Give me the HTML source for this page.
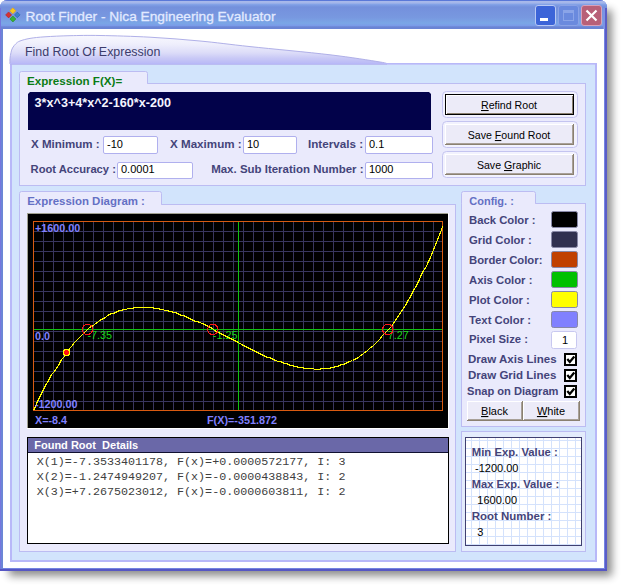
<!DOCTYPE html>
<html><head><meta charset="utf-8"><title>Root Finder</title>
<style>html,body{margin:0;padding:0;background:#fff;overflow:hidden} svg{display:block} text{white-space:pre}</style>
</head><body><svg width="623" height="587" viewBox="0 0 623 587" shape-rendering="auto"><defs>
<linearGradient id="tb" x1="0" y1="0" x2="0" y2="29" gradientUnits="userSpaceOnUse">
 <stop offset="0" stop-color="#5a78d8"/>
 <stop offset="0.035" stop-color="#5a78d8"/>
 <stop offset="0.05" stop-color="#a8b8ea"/>
 <stop offset="0.10" stop-color="#a4b6ea"/>
 <stop offset="0.16" stop-color="#80a0e6"/>
 <stop offset="0.24" stop-color="#7490dc"/>
 <stop offset="0.60" stop-color="#7898e0"/>
 <stop offset="0.80" stop-color="#7aa6e6"/>
 <stop offset="0.88" stop-color="#7a9ce8"/>
 <stop offset="0.93" stop-color="#6a84d4"/>
 <stop offset="1" stop-color="#6a84d4"/>
</linearGradient>
<linearGradient id="hdr" x1="0" y1="36" x2="0" y2="64" gradientUnits="userSpaceOnUse">
 <stop offset="0" stop-color="#f8f8fe"/>
 <stop offset="0.3" stop-color="#eeeefc"/>
 <stop offset="0.6" stop-color="#dcdcf8"/>
 <stop offset="0.8" stop-color="#c8c8f6"/>
 <stop offset="1" stop-color="#b8b8f6"/>
</linearGradient>
<filter id="shf" x="-10%" y="-10%" width="130%" height="130%"><feGaussianBlur stdDeviation="4"/></filter>
<pattern id="gp" x="471" y="440" width="8" height="8" patternUnits="userSpaceOnUse">
 <rect x="0" y="0" width="8" height="8" fill="#ffffff"/>
 <rect x="0" y="0" width="1" height="8" fill="#d4e2fc"/>
 <rect x="0" y="0" width="8" height="1" fill="#d4e2fc"/>
</pattern>
</defs>
<rect x="0" y="0" width="623" height="587" fill="#ffffff" />
<rect x="9" y="10" width="603" height="566" fill="#000" opacity="0.45" filter="url(#shf)"/>
<path d="M0 8 Q0 0 8 0 L599 0 Q607 0 607 8 L607 571 L0 571 Z" fill="#7484e0"/>
<path d="M0 8 Q0 0 8 0 L599 0 Q607 0 607 8 L607 29 L0 29 Z" fill="url(#tb)"/>
<rect x="0" y="8" width="1" height="563" fill="#7676de" />
<rect x="1" y="29" width="2" height="542" fill="#6c86d6" />
<rect x="605" y="8" width="2" height="563" fill="#5a5cc8" />
<rect x="603" y="8" width="2" height="21" fill="#7c94e4" />
<rect x="0" y="569" width="607" height="2" fill="#5656c4" />
<rect x="3" y="29" width="601" height="539" fill="#ffffff" />
<path d="M12.8 7.800000000000001 L15.8 10.8 L12.8 13.8 L9.8 10.8 Z" fill="#f8c820" stroke="#e0a010" stroke-width="0.6"/>
<path d="M8.6 11.9 L11.6 14.9 L8.6 17.9 L5.6 14.9 Z" fill="#d83030" stroke="#b02020" stroke-width="0.6"/>
<path d="M17.3 12.100000000000001 L20.1 14.9 L17.3 17.7 L14.5 14.9 Z" fill="#3c80c8" stroke="#2a60a8" stroke-width="0.6"/>
<path d="M12.9 16.0 L15.9 19.0 L12.9 22.0 L9.9 19.0 Z" fill="#38b038" stroke="#209020" stroke-width="0.6"/>
<text x="25.5" y="21" font-family="Liberation Sans" font-size="13.7" font-weight="normal" fill="#e2eaff" text-anchor="start" transform="translate(25.5 0) scale(1.0020 1) translate(-25.5 0)" stroke="#e2eaff" stroke-width="0.3">Root Finder - Nica Engineering Evaluator</text>
<rect x="535.5" y="5.5" width="20" height="20" rx="2.5" fill="#3c64d8" stroke="#b8c8f4" stroke-width="1"/>
<rect x="540" y="18" width="8" height="3" fill="#ffffff" />
<rect x="558.5" y="5.5" width="20" height="20" rx="2.5" fill="#6a8ade" stroke="#8aa2e6" stroke-width="1"/>
<rect x="563.5" y="10.5" width="10" height="10" fill="none" stroke="#8aa4e8" stroke-width="1"/>
<rect x="564" y="11" width="9" height="2" fill="#8aa4e8" />
<rect x="581.5" y="5.5" width="20" height="20" rx="2.5" fill="#b86078" stroke="#d8a0b8" stroke-width="1"/>
<path d="M586.5 10.5 L596.5 20.5 M596.5 10.5 L586.5 20.5" stroke="#ffffff" stroke-width="2.2"/>
<rect x="10" y="63" width="587" height="499" fill="#b8b8f8" />
<rect x="12" y="65" width="583" height="495" fill="#d2e4fc" />
<rect x="12" y="64" width="583" height="1" fill="#c4c8fa" />
<path d="M10 64 C10.00 63.08 9.83 60.42 10 58.5 C10.17 56.58 10.58 54.25 11 52.5 C11.42 50.75 11.67 49.48 12.5 48 C13.33 46.52 14.75 44.77 16 43.6 C17.25 42.43 17.67 41.87 20 41 C22.33 40.13 25.83 39.10 30 38.4 C34.17 37.70 38.33 37.25 45 36.8 C51.67 36.35 60.83 35.92 70 35.7 C79.17 35.48 86.67 35.25 100 35.5 C113.33 35.75 133.33 36.28 150 37.2 C166.67 38.12 183.33 39.43 200 41.0 C216.67 42.57 228.33 44.30 250 46.6 C271.67 48.90 308.33 52.23 330 54.8 C351.67 57.37 370.50 60.47 380 62 C389.50 63.53 385.83 63.67 387 64 Z" fill="url(#hdr)" stroke="#b0b0e8" stroke-width="1"/>
<rect x="10" y="63" width="587" height="1" fill="#b8b8f8" />
<text x="25" y="56.2" font-family="Liberation Sans" font-size="12.3" font-weight="normal" fill="#3c3c6c" text-anchor="start" transform="translate(25 0) scale(1.0105 1) translate(-25 0)" >Find Root Of Expression</text>
<rect x="19" y="83" width="567" height="103" fill="#bcbcf2" />
<rect x="20" y="84" width="565" height="101" fill="#eaeafc" />
<path d="M19.5 83.5 L19.5 73.5 Q19.5 71.5 21.5 71.5 L145.5 71.5 Q147.5 71.5 147.5 73.5 L147.5 83.5" fill="#eaeafc" stroke="#bcbcf2" stroke-width="1"/>
<rect x="20" y="83" width="127" height="2" fill="#eaeafc" />
<text x="27" y="85" font-family="Liberation Sans" font-size="11.5" font-weight="bold" fill="#0a7c16" text-anchor="start" transform="translate(27 0) scale(1.0120 1) translate(-27 0)" >Expression F(X)=</text>
<path d="M30 92 L429 92 L431 94 L431 130 L28 130 L28 94 Z" fill="#02024a"/>
<text x="34.6" y="106.6" font-family="Liberation Sans" font-size="12.4" font-weight="bold" fill="#f4f4ff" text-anchor="start" transform="translate(34.6 0) scale(1.0170 1) translate(-34.6 0)" >3*x^3+4*x^2-160*x-200</text>
<text x="31" y="148" font-family="Liberation Sans" font-size="11.3" font-weight="bold" fill="#44447a" text-anchor="start" transform="translate(31 0) scale(1.0212 1) translate(-31 0)" >X Minimum :</text>
<rect x="103.5" y="136.5" width="54" height="17" rx="1.5" fill="#ffffff" stroke="#b0b0ee" stroke-width="1"/>
<text x="107" y="148" font-family="Liberation Sans" font-size="11" font-weight="normal" fill="#000000" text-anchor="start"  >-10</text>
<text x="170" y="148" font-family="Liberation Sans" font-size="11.3" font-weight="bold" fill="#44447a" text-anchor="start" transform="translate(170 0) scale(1.0294 1) translate(-170 0)" >X Maximum :</text>
<rect x="243.5" y="136.5" width="53" height="17" rx="1.5" fill="#ffffff" stroke="#b0b0ee" stroke-width="1"/>
<text x="247" y="148" font-family="Liberation Sans" font-size="11" font-weight="normal" fill="#000000" text-anchor="start"  >10</text>
<text x="308" y="148" font-family="Liberation Sans" font-size="11.3" font-weight="bold" fill="#44447a" text-anchor="start" transform="translate(308 0) scale(1.0327 1) translate(-308 0)" >Intervals :</text>
<rect x="365.5" y="136.5" width="67" height="17" rx="1.5" fill="#ffffff" stroke="#b0b0ee" stroke-width="1"/>
<text x="369" y="148" font-family="Liberation Sans" font-size="11" font-weight="normal" fill="#000000" text-anchor="start"  >0.1</text>
<text x="30.6" y="173" font-family="Liberation Sans" font-size="11.0" font-weight="bold" fill="#44447a" text-anchor="start" transform="translate(30.6 0) scale(1.0171 1) translate(-30.6 0)" >Root Accuracy :</text>
<rect x="117.5" y="162.5" width="75" height="16" rx="1.5" fill="#ffffff" stroke="#b0b0ee" stroke-width="1"/>
<text x="121" y="173" font-family="Liberation Sans" font-size="11" font-weight="normal" fill="#000000" text-anchor="start"  >0.0001</text>
<text x="211.2" y="173" font-family="Liberation Sans" font-size="11.0" font-weight="bold" fill="#44447a" text-anchor="start" transform="translate(211.2 0) scale(1.0438 1) translate(-211.2 0)" >Max. Sub Iteration Number :</text>
<rect x="365.5" y="162.5" width="67" height="16" rx="1.5" fill="#ffffff" stroke="#b0b0ee" stroke-width="1"/>
<text x="369" y="173" font-family="Liberation Sans" font-size="11" font-weight="normal" fill="#000000" text-anchor="start"  >1000</text>
<rect x="442.5" y="91.5" width="135" height="26" rx="4" fill="#f2f2fe" stroke="#c4c4f0" stroke-width="1"/>
<rect x="445" y="94" width="129" height="21" fill="#000000" />
<rect x="446" y="95" width="127" height="19" fill="#ffffff" />
<rect x="447" y="96" width="126" height="18" fill="#8a8070" />
<rect x="447" y="96" width="125" height="17" fill="#ecebf8" />
<text x="509.0" y="109" font-family="Liberation Sans" font-size="10.6" font-weight="normal" fill="#000000" text-anchor="middle"  ><tspan text-decoration="underline">R</tspan>efind Root</text>
<rect x="442.5" y="121.5" width="135" height="26" rx="4" fill="#f2f2fe" stroke="#c4c4f0" stroke-width="1"/>
<rect x="445" y="124" width="129" height="21" fill="#8a8070" />
<rect x="445" y="124" width="128" height="20" fill="#ffffff" />
<rect x="446" y="125" width="127" height="19" fill="#a8a098" />
<rect x="446" y="125" width="126" height="18" fill="#ecebf8" />
<text x="509.0" y="139" font-family="Liberation Sans" font-size="10.6" font-weight="normal" fill="#000000" text-anchor="middle"  >Save <tspan text-decoration="underline">F</tspan>ound Root</text>
<rect x="442.5" y="151.5" width="135" height="26" rx="4" fill="#f2f2fe" stroke="#c4c4f0" stroke-width="1"/>
<rect x="445" y="154" width="129" height="21" fill="#8a8070" />
<rect x="445" y="154" width="128" height="20" fill="#ffffff" />
<rect x="446" y="155" width="127" height="19" fill="#a8a098" />
<rect x="446" y="155" width="126" height="18" fill="#ecebf8" />
<text x="509.0" y="169" font-family="Liberation Sans" font-size="10.6" font-weight="normal" fill="#000000" text-anchor="middle"  >Save <tspan text-decoration="underline">G</tspan>raphic</text>
<rect x="19" y="204" width="437" height="348" fill="#bcbcf2" />
<rect x="20" y="205" width="435" height="346" fill="#eaeafc" />
<path d="M19.5 204.5 L19.5 193.5 Q19.5 191.5 21.5 191.5 L159.5 191.5 Q161.5 191.5 161.5 193.5 L161.5 204.5" fill="#eaeafc" stroke="#bcbcf2" stroke-width="1"/>
<rect x="20" y="204" width="141" height="2" fill="#eaeafc" />
<text x="27.2" y="205" font-family="Liberation Sans" font-size="11.5" font-weight="bold" fill="#6470c4" text-anchor="start" transform="translate(27.2 0) scale(0.9970 1) translate(-27.2 0)" >Expression Diagram :</text>
<rect x="27" y="213" width="422" height="216" fill="#ffffff" />
<rect x="27" y="213" width="421" height="215" fill="#a0a090" />
<rect x="28" y="214" width="420" height="214" fill="#000000" />
<rect x="43" y="222" width="1" height="188" fill="#38365e" />
<rect x="53" y="222" width="1" height="188" fill="#38365e" />
<rect x="63" y="222" width="1" height="188" fill="#38365e" />
<rect x="73" y="222" width="1" height="188" fill="#38365e" />
<rect x="83" y="222" width="1" height="188" fill="#38365e" />
<rect x="93" y="222" width="1" height="188" fill="#38365e" />
<rect x="103" y="222" width="1" height="188" fill="#38365e" />
<rect x="113" y="222" width="1" height="188" fill="#38365e" />
<rect x="123" y="222" width="1" height="188" fill="#38365e" />
<rect x="133" y="222" width="1" height="188" fill="#38365e" />
<rect x="143" y="222" width="1" height="188" fill="#38365e" />
<rect x="153" y="222" width="1" height="188" fill="#38365e" />
<rect x="163" y="222" width="1" height="188" fill="#38365e" />
<rect x="173" y="222" width="1" height="188" fill="#38365e" />
<rect x="183" y="222" width="1" height="188" fill="#38365e" />
<rect x="193" y="222" width="1" height="188" fill="#38365e" />
<rect x="203" y="222" width="1" height="188" fill="#38365e" />
<rect x="213" y="222" width="1" height="188" fill="#38365e" />
<rect x="223" y="222" width="1" height="188" fill="#38365e" />
<rect x="233" y="222" width="1" height="188" fill="#38365e" />
<rect x="243" y="222" width="1" height="188" fill="#38365e" />
<rect x="253" y="222" width="1" height="188" fill="#38365e" />
<rect x="263" y="222" width="1" height="188" fill="#38365e" />
<rect x="273" y="222" width="1" height="188" fill="#38365e" />
<rect x="283" y="222" width="1" height="188" fill="#38365e" />
<rect x="293" y="222" width="1" height="188" fill="#38365e" />
<rect x="303" y="222" width="1" height="188" fill="#38365e" />
<rect x="313" y="222" width="1" height="188" fill="#38365e" />
<rect x="323" y="222" width="1" height="188" fill="#38365e" />
<rect x="333" y="222" width="1" height="188" fill="#38365e" />
<rect x="343" y="222" width="1" height="188" fill="#38365e" />
<rect x="353" y="222" width="1" height="188" fill="#38365e" />
<rect x="363" y="222" width="1" height="188" fill="#38365e" />
<rect x="373" y="222" width="1" height="188" fill="#38365e" />
<rect x="383" y="222" width="1" height="188" fill="#38365e" />
<rect x="393" y="222" width="1" height="188" fill="#38365e" />
<rect x="403" y="222" width="1" height="188" fill="#38365e" />
<rect x="413" y="222" width="1" height="188" fill="#38365e" />
<rect x="423" y="222" width="1" height="188" fill="#38365e" />
<rect x="433" y="222" width="1" height="188" fill="#38365e" />
<rect x="34" y="231" width="408" height="1" fill="#38365e" />
<rect x="34" y="241" width="408" height="1" fill="#38365e" />
<rect x="34" y="251" width="408" height="1" fill="#38365e" />
<rect x="34" y="261" width="408" height="1" fill="#38365e" />
<rect x="34" y="271" width="408" height="1" fill="#38365e" />
<rect x="34" y="281" width="408" height="1" fill="#38365e" />
<rect x="34" y="291" width="408" height="1" fill="#38365e" />
<rect x="34" y="301" width="408" height="1" fill="#38365e" />
<rect x="34" y="311" width="408" height="1" fill="#38365e" />
<rect x="34" y="321" width="408" height="1" fill="#38365e" />
<rect x="34" y="331" width="408" height="1" fill="#38365e" />
<rect x="34" y="341" width="408" height="1" fill="#38365e" />
<rect x="34" y="351" width="408" height="1" fill="#38365e" />
<rect x="34" y="361" width="408" height="1" fill="#38365e" />
<rect x="34" y="371" width="408" height="1" fill="#38365e" />
<rect x="34" y="381" width="408" height="1" fill="#38365e" />
<rect x="34" y="391" width="408" height="1" fill="#38365e" />
<rect x="34" y="401" width="408" height="1" fill="#38365e" />
<rect x="33.5" y="221.5" width="409" height="189" fill="none" stroke="#d85a10" stroke-width="1" rx="0" />
<rect x="34" y="329" width="408" height="1" fill="#10c010" />
<rect x="238" y="222" width="1" height="188" fill="#10c010" />
<text x="87.38886057920999" y="338.8" font-family="Liberation Sans" font-size="10.8" font-weight="normal" fill="#18d818" text-anchor="start"  >-7.35</text>
<text x="212.86397937961502" y="338.8" font-family="Liberation Sans" font-size="10.8" font-weight="normal" fill="#18d818" text-anchor="start"  >-1.25</text>
<text x="387.84717228965997" y="338.8" font-family="Liberation Sans" font-size="10.8" font-weight="normal" fill="#18d818" text-anchor="start"  >7.27</text>
<polyline points="33.5,410.5 35.5,406.5 37.5,401.5 39.5,397.5 41.5,393.5 43.5,389.5 45.5,385.5 47.5,382.5 49.5,378.5 51.5,374.5 54.5,371.5 56.5,368.5 58.5,365.5 60.5,361.5 62.5,358.5 64.5,356.5 66.5,353.5 68.5,350.5 70.5,347.5 72.5,345.5 74.5,342.5 76.5,340.5 78.5,338.5 80.5,336.5 82.5,334.5 84.5,332.5 86.5,330.5 88.5,328.5 91.5,326.5 93.5,325.5 95.5,323.5 97.5,322.5 99.5,320.5 101.5,319.5 103.5,318.5 105.5,317.5 107.5,315.5 109.5,314.5 111.5,313.5 113.5,313.5 115.5,312.5 117.5,311.5 119.5,310.5 121.5,310.5 123.5,309.5 125.5,309.5 128.5,308.5 130.5,308.5 132.5,308.5 134.5,307.5 136.5,307.5 138.5,307.5 140.5,307.5 142.5,307.5 144.5,307.5 146.5,307.5 148.5,307.5 150.5,307.5 152.5,307.5 154.5,308.5 156.5,308.5 158.5,308.5 160.5,309.5 162.5,309.5 165.5,310.5 167.5,310.5 169.5,311.5 171.5,311.5 173.5,312.5 175.5,312.5 177.5,313.5 179.5,314.5 181.5,315.5 183.5,315.5 185.5,316.5 187.5,317.5 189.5,318.5 191.5,319.5 193.5,320.5 195.5,321.5 197.5,321.5 199.5,322.5 202.5,323.5 204.5,324.5 206.5,325.5 208.5,326.5 210.5,327.5 212.5,328.5 214.5,330.5 216.5,331.5 218.5,332.5 220.5,333.5 222.5,334.5 224.5,335.5 226.5,336.5 228.5,337.5 230.5,338.5 232.5,339.5 234.5,340.5 236.5,341.5 238.5,342.5 241.5,344.5 243.5,345.5 245.5,346.5 247.5,347.5 249.5,348.5 251.5,349.5 253.5,350.5 255.5,351.5 257.5,352.5 259.5,353.5 261.5,354.5 263.5,355.5 265.5,356.5 267.5,357.5 269.5,357.5 271.5,358.5 273.5,359.5 275.5,360.5 278.5,361.5 280.5,361.5 282.5,362.5 284.5,363.5 286.5,363.5 288.5,364.5 290.5,365.5 292.5,365.5 294.5,366.5 296.5,366.5 298.5,367.5 300.5,367.5 302.5,367.5 304.5,368.5 306.5,368.5 308.5,368.5 310.5,368.5 312.5,368.5 315.5,369.5 317.5,369.5 319.5,369.5 321.5,368.5 323.5,368.5 325.5,368.5 327.5,368.5 329.5,368.5 331.5,367.5 333.5,367.5 335.5,366.5 337.5,366.5 339.5,365.5 341.5,364.5 343.5,364.5 345.5,363.5 347.5,362.5 349.5,361.5 352.5,360.5 354.5,359.5 356.5,358.5 358.5,357.5 360.5,355.5 362.5,354.5 364.5,352.5 366.5,351.5 368.5,349.5 370.5,347.5 372.5,346.5 374.5,344.5 376.5,342.5 378.5,340.5 380.5,338.5 382.5,335.5 384.5,333.5 386.5,331.5 389.5,328.5 391.5,326.5 393.5,323.5 395.5,320.5 397.5,317.5 399.5,314.5 401.5,311.5 403.5,308.5 405.5,305.5 407.5,301.5 409.5,298.5 411.5,294.5 413.5,290.5 415.5,287.5 417.5,283.5 419.5,279.5 421.5,274.5 423.5,270.5 426.5,266.5 428.5,261.5 430.5,257.5 432.5,252.5 434.5,247.5 436.5,242.5 438.5,237.5 440.5,232.5 442.5,226.5" fill="none" stroke="#ffff00" stroke-width="1.1" shape-rendering="crispEdges"/>
<circle cx="87.4" cy="329.4" r="5.2" fill="none" stroke="#ff1818" stroke-width="1.1" shape-rendering="crispEdges"/>
<circle cx="212.9" cy="329.4" r="5.2" fill="none" stroke="#ff1818" stroke-width="1.1" shape-rendering="crispEdges"/>
<circle cx="387.8" cy="329.4" r="5.2" fill="none" stroke="#ff1818" stroke-width="1.1" shape-rendering="crispEdges"/>
<circle cx="66.5" cy="352.5" r="3.2" fill="#ff1010" stroke="#ffff00" stroke-width="1.1" shape-rendering="crispEdges"/>
<text x="35" y="231.6" font-family="Liberation Sans" font-size="10.8" font-weight="bold" fill="#8080ff" text-anchor="start"  >+1600.00</text>
<text x="35" y="339.5" font-family="Liberation Sans" font-size="10.8" font-weight="bold" fill="#8080ff" text-anchor="start"  >0.0</text>
<text x="35" y="408" font-family="Liberation Sans" font-size="10.8" font-weight="bold" fill="#8080ff" text-anchor="start"  >-1200.00</text>
<text x="35" y="423.6" font-family="Liberation Sans" font-size="10.8" font-weight="bold" fill="#8080ff" text-anchor="start"  >X=-8.4</text>
<text x="207" y="423.6" font-family="Liberation Sans" font-size="10.8" font-weight="bold" fill="#8080ff" text-anchor="start"  >F(X)=-351.872</text>
<rect x="27" y="437" width="422" height="107" fill="#000000" />
<rect x="28" y="438" width="420" height="105" fill="#ffffff" />
<rect x="28" y="438" width="420" height="14" fill="#6a68a8" />
<rect x="28" y="452" width="420" height="1" fill="#101030" />
<text x="34.2" y="448.8" font-family="Liberation Sans" font-size="11.5" font-weight="bold" fill="#ffffff" text-anchor="start" transform="translate(34.2 0) scale(0.9587 1) translate(-34.2 0)" xml:space="preserve">Found Root  Details</text>
<text x="36.8" y="465" font-family="Liberation Mono" font-size="11.7" font-weight="normal" fill="#404040" text-anchor="start"  xml:space="preserve">X(1)=-7.3533401178, F(x)=+0.0000572177, I: 3</text>
<text x="36.8" y="480" font-family="Liberation Mono" font-size="11.7" font-weight="normal" fill="#404040" text-anchor="start"  xml:space="preserve">X(2)=-1.2474949207, F(x)=-0.0000438843, I: 2</text>
<text x="36.8" y="495" font-family="Liberation Mono" font-size="11.7" font-weight="normal" fill="#404040" text-anchor="start"  xml:space="preserve">X(3)=+7.2675023012, F(x)=-0.0000603811, I: 2</text>
<rect x="461" y="203" width="125" height="224" fill="#bcbcf2" />
<rect x="462" y="204" width="123" height="222" fill="#eaeafc" />
<path d="M461.5 203.5 L461.5 193.5 Q461.5 191.5 463.5 191.5 L533.5 191.5 Q535.5 191.5 535.5 193.5 L535.5 203.5" fill="#eaeafc" stroke="#bcbcf2" stroke-width="1"/>
<rect x="462" y="203" width="73" height="2" fill="#eaeafc" />
<text x="469.3" y="205" font-family="Liberation Sans" font-size="11.5" font-weight="bold" fill="#6470c4" text-anchor="start" transform="translate(469.3 0) scale(0.9550 1) translate(-469.3 0)" >Config. :</text>
<text x="469" y="224" font-family="Liberation Sans" font-size="11.3" font-weight="bold" fill="#44447a" text-anchor="start"  >Back Color :</text>
<rect x="551.5" y="211.5" width="26" height="16" rx="2" fill="#000000" stroke="#8888a8" stroke-width="1"/>
<text x="469" y="244" font-family="Liberation Sans" font-size="11.3" font-weight="bold" fill="#44447a" text-anchor="start"  >Grid Color :</text>
<rect x="551.5" y="231.5" width="26" height="16" rx="2" fill="#303050" stroke="#8888a8" stroke-width="1"/>
<text x="469" y="264" font-family="Liberation Sans" font-size="11.3" font-weight="bold" fill="#44447a" text-anchor="start"  >Border Color:</text>
<rect x="551.5" y="251.5" width="26" height="16" rx="2" fill="#c04000" stroke="#8888a8" stroke-width="1"/>
<text x="469" y="284" font-family="Liberation Sans" font-size="11.3" font-weight="bold" fill="#44447a" text-anchor="start"  >Axis Color :</text>
<rect x="551.5" y="271.5" width="26" height="16" rx="2" fill="#00c000" stroke="#8888a8" stroke-width="1"/>
<text x="469" y="304" font-family="Liberation Sans" font-size="11.3" font-weight="bold" fill="#44447a" text-anchor="start"  >Plot Color :</text>
<rect x="551.5" y="291.5" width="26" height="16" rx="2" fill="#ffff00" stroke="#8888a8" stroke-width="1"/>
<text x="469" y="324" font-family="Liberation Sans" font-size="11.3" font-weight="bold" fill="#44447a" text-anchor="start"  >Text Color :</text>
<rect x="551.5" y="311.5" width="26" height="16" rx="2" fill="#8080ff" stroke="#8888a8" stroke-width="1"/>
<text x="469" y="342.6" font-family="Liberation Sans" font-size="11.3" font-weight="bold" fill="#44447a" text-anchor="start"  >Pixel Size :</text>
<rect x="551.5" y="331.5" width="25" height="17" rx="2" fill="#ffffff" stroke="#c8c8f0" stroke-width="1"/>
<text x="565" y="344" font-family="Liberation Sans" font-size="11" font-weight="normal" fill="#000000" text-anchor="middle"  >1</text>
<text x="468" y="362.8" font-family="Liberation Sans" font-size="11.3" font-weight="bold" fill="#44447a" text-anchor="start" transform="translate(468 0) scale(1.0221 1) translate(-468 0)" >Draw Axis Lines</text>
<rect x="565" y="354" width="11" height="11" fill="#ffffff" stroke="#000000" stroke-width="2"/>
<path d="M567.3 359 L569.8 362 L574.3 356.6" fill="none" stroke="#000000" stroke-width="2.3"/>
<text x="468" y="378.8" font-family="Liberation Sans" font-size="11.3" font-weight="bold" fill="#44447a" text-anchor="start" transform="translate(468 0) scale(1.0221 1) translate(-468 0)" >Draw Grid Lines</text>
<rect x="565" y="370" width="11" height="11" fill="#ffffff" stroke="#000000" stroke-width="2"/>
<path d="M567.3 375 L569.8 378 L574.3 372.6" fill="none" stroke="#000000" stroke-width="2.3"/>
<text x="467" y="394.8" font-family="Liberation Sans" font-size="11.3" font-weight="bold" fill="#44447a" text-anchor="start" transform="translate(467 0) scale(0.9857 1) translate(-467 0)" >Snap on Diagram</text>
<rect x="565" y="386" width="11" height="11" fill="#ffffff" stroke="#000000" stroke-width="2"/>
<path d="M567.3 391 L569.8 394 L574.3 388.6" fill="none" stroke="#000000" stroke-width="2.3"/>
<rect x="467" y="401" width="56" height="20" fill="#8a8070" />
<rect x="467" y="401" width="55" height="19" fill="#ffffff" />
<rect x="468" y="402" width="54" height="18" fill="#a8a098" />
<rect x="468" y="402" width="53" height="17" fill="#ecebf8" />
<text x="494.5" y="415" font-family="Liberation Sans" font-size="11" font-weight="normal" fill="#000000" text-anchor="middle"  ><tspan text-decoration="underline">B</tspan>lack</text>
<rect x="523" y="401" width="57" height="20" fill="#8a8070" />
<rect x="523" y="401" width="56" height="19" fill="#ffffff" />
<rect x="524" y="402" width="55" height="18" fill="#a8a098" />
<rect x="524" y="402" width="54" height="17" fill="#ecebf8" />
<text x="551.0" y="415" font-family="Liberation Sans" font-size="11" font-weight="normal" fill="#000000" text-anchor="middle"  ><tspan text-decoration="underline">W</tspan>hite</text>
<rect x="461" y="431" width="125" height="121" fill="#bcbcf2" />
<rect x="462" y="432" width="123" height="119" fill="#e4ecfc" />
<rect x="465" y="437" width="117" height="109" fill="url(#gp)"/>
<rect x="465.5" y="437.5" width="116" height="108" fill="none" stroke="#404070" stroke-width="1" rx="0" />
<text x="471.8" y="455.9" font-family="Liberation Sans" font-size="11.3" font-weight="bold" fill="#44447a" text-anchor="start"  >Min Exp. Value :</text>
<text x="475" y="471.7" font-family="Liberation Sans" font-size="11" font-weight="normal" fill="#000000" text-anchor="start"  >-1200.00</text>
<text x="471.8" y="487.8" font-family="Liberation Sans" font-size="11.3" font-weight="bold" fill="#44447a" text-anchor="start" transform="translate(471.8 0) scale(0.9862 1) translate(-471.8 0)" >Max Exp. Value :</text>
<text x="477.3" y="504.1" font-family="Liberation Sans" font-size="11" font-weight="normal" fill="#000000" text-anchor="start"  >1600.00</text>
<text x="471.8" y="520" font-family="Liberation Sans" font-size="11.3" font-weight="bold" fill="#44447a" text-anchor="start" transform="translate(471.8 0) scale(1.0145 1) translate(-471.8 0)" >Root Number :</text>
<text x="477.3" y="535.7" font-family="Liberation Sans" font-size="11" font-weight="normal" fill="#000000" text-anchor="start"  >3</text></svg></body></html>
